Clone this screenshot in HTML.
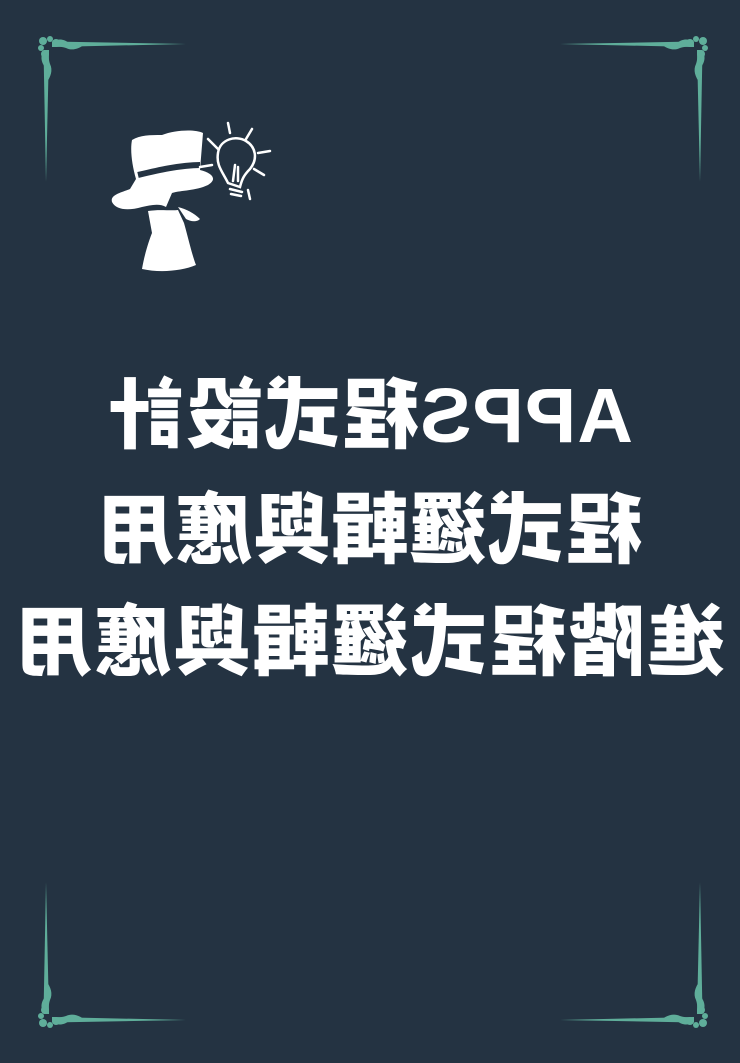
<!DOCTYPE html>
<html><head><meta charset="utf-8"><style>
html,body{margin:0;padding:0}
body{width:740px;height:1063px;background:#243342;position:relative;overflow:hidden;font-family:"Liberation Sans","Noto Sans CJK TC",sans-serif}
.c{position:absolute;width:160px;height:160px}
.t{position:absolute;left:0;width:740px;text-align:center;color:#fff;font-weight:900;font-size:77px;line-height:80px;transform:scaleX(-1);white-space:nowrap}
</style></head><body>
<svg width="0" height="0" style="position:absolute"><defs>
<g id="orn" fill="#5fae9a">
<path d="M14,5.5 L148,8 L14,11 Z"/>
<path d="M5.5,14 L8,146 L11,14 Z"/>
<path d="M14,6 C20,2 26,3 31,7 C35,10 40,10 47,8 C41,13 34,15 28,12 C22,10 18,11 14,11 Z"/>
<path d="M6,14 C2,20 3,26 7,31 C10,35 10,40 8,47 C13,41 15,34 12,28 C10,22 11,18 11,14 Z"/>
<circle cx="5" cy="5" r="4"/><circle cx="12" cy="3" r="3"/><circle cx="3" cy="12" r="3"/>
<circle cx="18" cy="7" r="4"/><circle cx="7" cy="18" r="4"/>
</g></defs></svg>
<svg class="c" style="left:38px;top:36px"><use href="#orn"/></svg>
<svg class="c" style="left:548px;top:36px;transform:scaleX(-1)"><use href="#orn"/></svg>
<svg class="c" style="left:38px;top:868px;transform:scaleY(-1)"><use href="#orn"/></svg>
<svg class="c" style="left:548px;top:868px;transform:scale(-1,-1)"><use href="#orn"/></svg>

<svg style="position:absolute;left:100px;top:115px" width="190" height="165" viewBox="0 0 190 165">
<g fill="#fff">
<path d="M62,20 C75,15 95,14 103,18 L100,55 C112,58 118,64 108,70 C95,76 82,75 72,78 L66,92 C60,88 50,90 42,92 C28,96 16,95 12,87 C10,80 20,78 30,74 L36,64 C32,50 30,35 32,25 C40,20 50,20 62,20 Z"/>
<path d="M48,96 C60,94 70,96 78,95 L84,108 C88,122 92,140 96,150 C82,156 60,158 42,154 C44,142 48,128 52,118 Z"/>
<path d="M78,92 C86,94 94,98 100,104 C96,108 90,106 86,104 Z"/>
</g>
<path d="M38,60 C55,56 80,50 100,50" stroke="#243342" stroke-width="6" fill="none"/>
<g stroke="#fff" stroke-width="2.5" fill="none" stroke-linecap="round">
<path d="M128,68 C122,56 116,50 118,38 C120,24 136,20 146,26 C156,32 158,44 150,54 C144,60 142,64 140,72 Z"/>
<path d="M130,74 L142,77 M131,79 L141,81"/>
<path d="M133,66 L135,50 M138,66 L138,52"/>
<path d="M100,52 L112,50 M108,24 L118,34 M128,8 L130,18 M152,14 L146,24 M170,36 L158,38 M164,60 L154,54 M148,75 L150,84"/>
</g>
</svg>

<div class="t" style="top:376px;letter-spacing:1px">APPS程式設計</div>
<div class="t" style="top:491px;letter-spacing:1px;text-indent:1px">程式邏輯與應用</div>
<div class="t" style="top:603px;letter-spacing:2px;text-indent:2px">進階程式邏輯與應用</div>
</body></html>
